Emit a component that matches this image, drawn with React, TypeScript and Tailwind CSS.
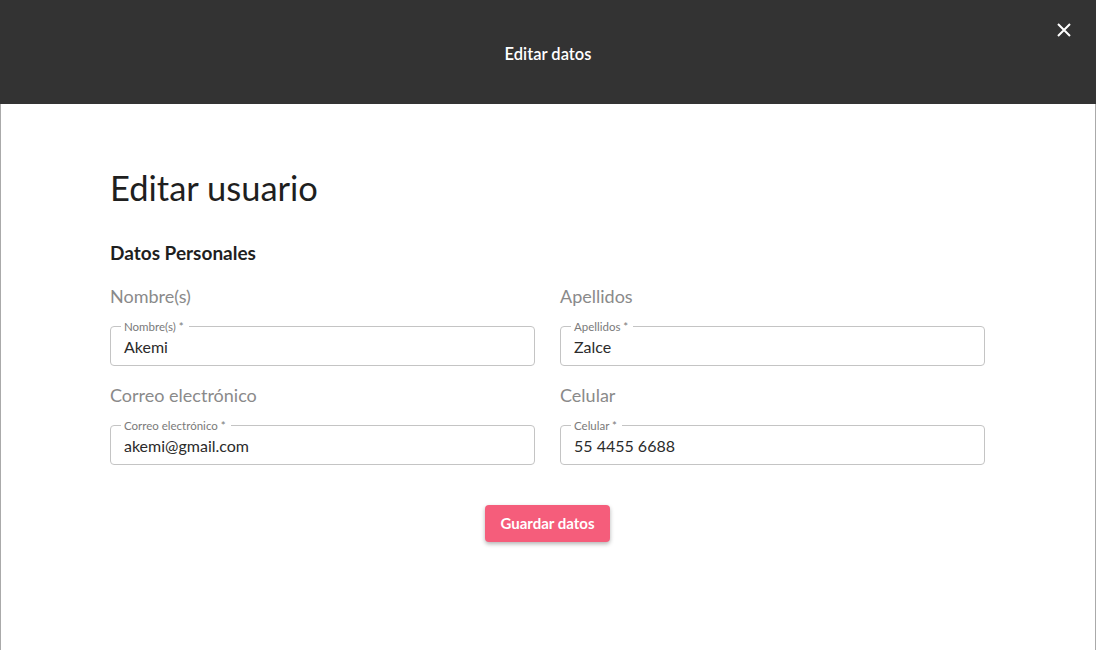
import React from "react";

type Field = { title: string; label: string; value: string };

const fields: Field[] = [
  { title: "Nombre(s)", label: "Nombre(s) *", value: "Akemi" },
  { title: "Apellidos", label: "Apellidos *", value: "Zalce" },
  { title: "Correo electrónico", label: "Correo electrónico *", value: "akemi@gmail.com" },
  { title: "Celular", label: "Celular *", value: "55 4455 6688" },
];

const OutlinedInput = ({ f }: { f: Field }) => (
  <div className="flex flex-col">
    <p className="text-[18px] leading-[24px] text-[#8a8a8a]">{f.title}</p>
    <div className="relative mt-[18px] h-[40px] rounded-[4px] border border-[#c4c4c4] pl-[13px] pt-[10px]">
      <span className="absolute left-[10px] top-[-7px] bg-white px-[3px] pr-[5px] text-[11.5px] leading-[13px] text-[#7a7a7a]">
        {f.label}
      </span>
      <p className="text-[16px] leading-[19px] text-[#2b2b2b]">{f.value}</p>
    </div>
  </div>
);

export default function App() {
  return (
    <div className="flex h-[650px] w-full flex-col bg-white font-['Lato','Liberation_Sans',sans-serif]">
      <div className="relative flex h-[104px] shrink-0 items-center justify-center bg-[#333333] pt-[5px]">
        <p className="text-[16.5px] font-semibold text-white">Editar datos</p>
        <button className="absolute right-[25px] top-[23px] text-white">
          <svg width="14" height="14" viewBox="0 0 14 14" fill="none" stroke="currentColor" strokeWidth="2">
            <path d="M1 1L13 13M13 1L1 13" />
          </svg>
        </button>
      </div>

      <div className="flex flex-1 flex-col border-x border-[#aaaaaa]">
        <div className="ml-[109px] flex w-[875px] flex-col pt-[64px]">
          <h1 className="text-[34.5px] leading-[40px] text-[#1f1f1f]">Editar usuario</h1>
          <h2 className="mt-[33px] text-[19px] font-bold leading-[24px] text-[#1f1f1f]">Datos Personales</h2>

          <div className="mt-[19px] grid grid-cols-2 gap-x-[25px] gap-y-[17px]">
            {fields.map((f) => (
              <OutlinedInput key={f.title} f={f} />
            ))}
          </div>

          <div className="mt-[40px] flex justify-center">
            <button className="h-[37px] w-[125px] rounded-[4px] bg-[#f55d7b] text-[15px] font-bold text-white shadow-[0_2px_4px_rgba(0,0,0,0.3)]">
              Guardar datos
            </button>
          </div>
        </div>
      </div>
    </div>
  );
}
